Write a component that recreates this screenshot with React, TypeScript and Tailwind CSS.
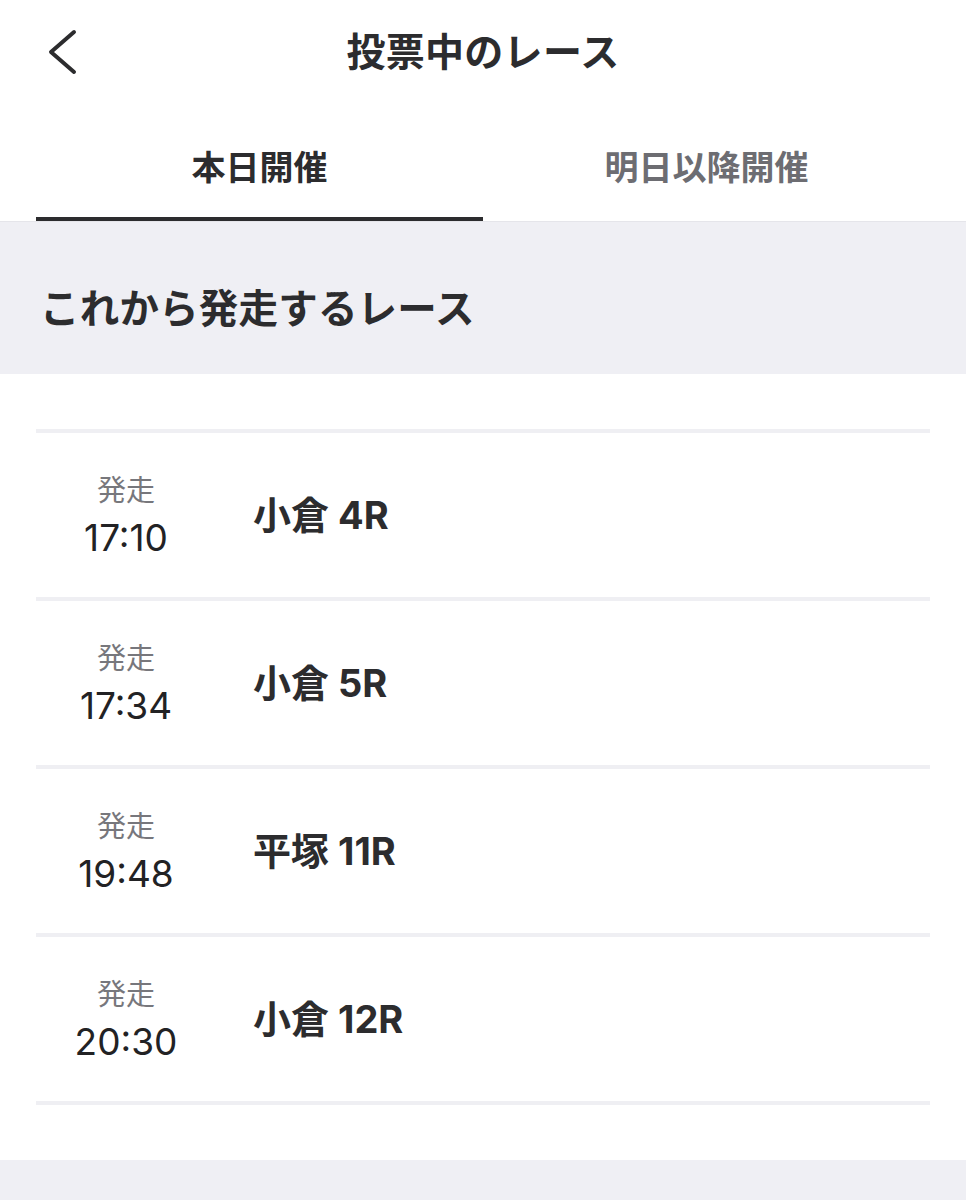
import React from "react";

const races = [
  { time: "17:10", name: "小倉", num: "4R" },
  { time: "17:34", name: "小倉", num: "5R" },
  { time: "19:48", name: "平塚", num: "11R" },
  { time: "20:30", name: "小倉", num: "12R" },
];

export default function App() {
  return (
    <div
      className="min-h-[1200px] w-full bg-white flex flex-col text-[#2c2c2e]"
      style={{ fontFamily: 'Inter, "Noto Sans CJK JP", "Noto Sans", sans-serif' }}
    >
      {/* Header */}
      <div className="h-[103px] grid grid-cols-[1fr_auto_1fr] items-center">
        <div className="pl-[46px] flex items-center">
          <svg width="32" height="46" viewBox="0 0 32 46" fill="none">
            <path
              d="M28 3 L5 23 L28 43"
              stroke="#2c2c2e"
              strokeWidth="4"
              strokeLinecap="round"
              strokeLinejoin="round"
            />
          </svg>
        </div>
        <div className="text-[39px] font-bold leading-none tracking-[0.3px]">投票中のレース</div>
        <div />
      </div>

      {/* Tabs */}
      <div className="flex px-[36px] border-b border-[#e5e5ea]">
        <div className="flex-1 h-[118px] flex items-center justify-center pt-[15px] border-b-[4px] border-[#2c2c2e] text-[34px] font-bold">
          本日開催
        </div>
        <div className="flex-1 h-[118px] flex items-center justify-center pt-[15px] border-b-[4px] border-transparent text-[34px] font-bold text-[#6d6d72]">
          明日以降開催
        </div>
      </div>

      {/* Section header */}
      <div className="h-[152px] bg-[#efeff4] pl-[40px] pt-[64px]">
        <div className="text-[39.5px] font-bold leading-[47px] tracking-[0.2px]">これから発走するレース</div>
      </div>

      {/* List */}
      <div className="bg-white px-[36px] pt-[55px] pb-[55px]">
        <div className="h-[4px] bg-[#efeff3]" />
        {races.map((r) => (
          <div key={r.time}>
            <div className="h-[164px] flex items-center">
              <div className="w-[180px] flex flex-col items-center pt-[3px] gap-[8px]">
                <div className="text-[29px] leading-[35px] text-[#77777c]">発走</div>
                <div className="text-[37px] leading-[44px] text-[#222224]">{r.time}</div>
              </div>
              <div className="ml-[37px] text-[38px] font-bold leading-[46px]">
                {r.name} {r.num}
              </div>
            </div>
            <div className="h-[4px] bg-[#efeff3]" />
          </div>
        ))}
      </div>

      <div className="flex-1 bg-[#efeff4] min-h-[60px]" />
    </div>
  );
}
